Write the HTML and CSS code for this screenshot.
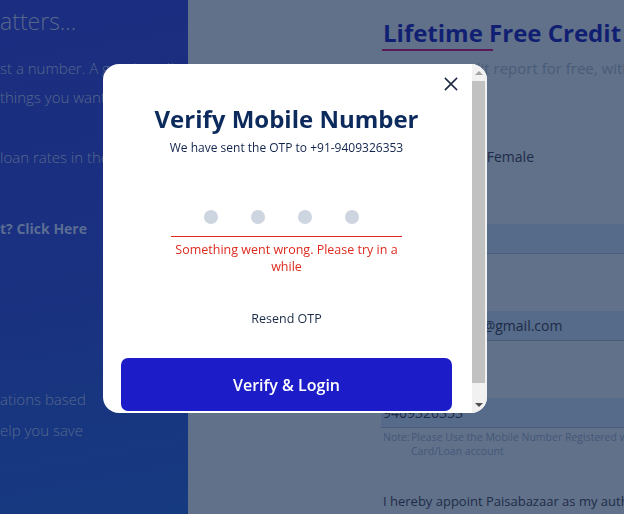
FILE: index.html
```html
<!DOCTYPE html>
<html lang="en">
<head>
<meta charset="utf-8">
<title>Verify Mobile Number</title>
<link rel="stylesheet" href="styles.css">
</head>
<body>
<div class="page">
  <aside class="side">
    <div class="side-title">atters...</div>
    <p class="side-p">st a number. A good credit score<br>things you want in life</p>
    <p class="side-p side-p2">loan rates in the market</p>
    <div class="side-link">t? Click Here</div>
    <p class="side-p side-p3">ations based<br>elp you save</p>
  </aside>
  <main class="main">
    <div class="form">
      <h2 class="form-title">Lifetime Free Credit Report</h2>
      <p class="form-sub">Get your Credit report for free, with monthly updates</p>
      <div class="gender"><span class="g-opt">Male</span><span class="g-opt">Female</span></div>
      <div class="band band1"><span class="band-text">Rahul Sharma</span></div>
      <div class="band band2"><span class="band-text">rahulsharma92@gmail.com</span></div>
      <div class="band band3"><span class="band-text">9409326353</span></div>
      <div class="note"><span class="note-label">Note:</span><span class="note-text">Please Use the Mobile Number Registered with your Credit Card/Loan account</span></div>
      <p class="consent">I hereby appoint Paisabazaar as my authorised representative</p>
    </div>
  </main>
</div>

<div class="backdrop">
  <div class="modal">
    <div class="modal-body">
      <div class="modal-head">
        <button class="close" aria-label="Close">
          <svg width="14" height="14" viewBox="0 0 14 14"><path d="M1.5 1.5 L12.5 12.5 M12.5 1.5 L1.5 12.5" stroke="#1d2942" stroke-width="1.7" fill="none" stroke-linecap="square"/></svg>
        </button>
      </div>
      <h1 class="m-title">Verify Mobile Number</h1>
      <p class="m-sub">We have sent the OTP to +91-9409326353</p>
      <div class="otp-wrap">
        <div class="otp">
          <span class="dot"></span><span class="dot"></span><span class="dot"></span><span class="dot"></span>
        </div>
        <p class="err">Something went wrong. Please try in a while</p>
      </div>
      <p class="resend">Resend OTP</p>
      <button class="verify">Verify &amp; Login</button>
    </div>
    <div class="sbar" aria-hidden="true">
      <div class="sbar-btn"><span class="tri-up"></span></div>
      <div class="sbar-track"><div class="sbar-thumb"></div></div>
      <div class="sbar-btn"><span class="tri-down"></span></div>
    </div>
  </div>
</div>
</body>
</html>
```
FILE: styles.css
```css
* { box-sizing: border-box; }
html, body { margin: 0; padding: 0; }
body {
  width: 624px;
  height: 514px;
  overflow: hidden;
  font-family: "Open Sans", "Liberation Sans", sans-serif;
  background: #617189;
}
.page {
  display: flex;
  height: 514px;
}
.side {
  width: 188px;
  flex: none;
  overflow: hidden;
  background: linear-gradient(170deg, #1b2d80 0%, #1a3080 50%, #163a80 100%);
  color: #56688b;
  white-space: nowrap;
  padding-top: 5px;
}
.side-title {
  font-size: 23px;
  line-height: 32px;
  font-weight: 300;
}
.side-p {
  margin: 17px 0 0;
  font-size: 15px;
  line-height: 29px;
  font-weight: 300;
}
.side-p2 { margin-top: 31px; }
.side-link {
  margin-top: 47px;
  font-size: 14px;
  line-height: 20px;
  font-weight: 700;
  color: #5b6d93;
}
.side-p3 {
  margin-top: 145px;
  line-height: 31px;
}
.main {
  flex: 1;
  overflow: hidden;
  padding-left: 193px;
}
.form {
  white-space: nowrap;
  padding-top: 17px;
}
.form-title {
  margin: 0;
  padding-left: 2px;
  font-size: 24px;
  line-height: 32px;
  font-weight: 700;
  color: #111f72;
}
.form-title::after {
  content: "";
  display: block;
  width: 111px;
  height: 2px;
  margin-left: -1px;
  background: #5c1a5a;
}
.form-sub {
  margin: 7px 0 0;
  padding-left: 2px;
  font-size: 15px;
  line-height: 20px;
  color: #4a5b7a;
}
.gender {
  margin-top: 69px;
  display: flex;
  gap: 50px;
  padding-left: 24px;
  font-size: 14px;
  line-height: 20px;
  color: #1e2c4a;
}
.band {
  height: 30px;
  background: #566a89;
  border-bottom: 1px solid #4b5c79;
  display: flex;
  align-items: center;
  padding-left: 2px;
  font-size: 14px;
  line-height: 20px;
  color: #1c2a47;
}
.band1 { margin-top: 57px; }
.band1 .band-text { visibility: hidden; }
.band2 { margin-top: 57px; }
.band3 { margin-top: 57px; }
.note {
  margin-top: 3px;
  display: flex;
  font-size: 10.5px;
  line-height: 13.5px;
  color: #44577a;
  padding-left: 2px;
  white-space: normal;
  width: 370px;
}
.note-label { width: 28px; flex: none; }
.consent {
  margin: 33px 0 0;
  padding-left: 2px;
  font-size: 13px;
  line-height: 20px;
  color: #1e2c4a;
}

/* Modal */
.backdrop {
  position: fixed;
  inset: 0;
  display: flex;
  align-items: flex-start;
  padding: 64px 0 0 103px;
}
.modal {
  width: 384px;
  height: 349px;
  background: #fff;
  border-radius: 16px;
  overflow: hidden;
  display: flex;
}
.modal-body {
  flex: 1;
  min-width: 0;
  display: flex;
  flex-direction: column;
  align-items: center;
  padding: 0 20px 20px 18px;
}
.modal-head {
  align-self: stretch;
  display: flex;
  justify-content: flex-end;
  padding-top: 13px;
  margin-right: -6px;
}
.close {
  width: 14px;
  height: 14px;
  padding: 0;
  border: 0;
  background: none;
  display: block;
}
.close svg { display: block; }
.m-title {
  margin: 12px 0 0;
  font-size: 24px;
  line-height: 32px;
  font-weight: 700;
  color: #0c2a5b;
  flex: none;
  white-space: nowrap;
}
.m-sub {
  margin: 5px 0 0;
  font-size: 12px;
  line-height: 16px;
  color: #10244d;
  flex: none;
}
.otp-wrap {
  width: 231px;
  margin-top: 42px;
  flex: none;
}
.otp {
  height: 39px;
  border-bottom: 1px solid #e5281d;
  display: flex;
  justify-content: center;
  align-items: center;
  gap: 33px;
  padding-right: 10px;
}
.dot {
  width: 14px;
  height: 14px;
  border-radius: 50%;
  background: #cdd5e0;
}
.err {
  margin: 4px 0 0;
  font-size: 12.5px;
  line-height: 17px;
  color: #dd2b1f;
  text-align: center;
}
.resend {
  margin: 36px 0 0;
  font-size: 12.5px;
  line-height: 16px;
  color: #1a2b48;
  flex: none;
}
.verify {
  flex: none;
  margin-top: 31px;
  align-self: stretch;
  height: 53px;
  border: 0;
  border-radius: 7px;
  background: #1c1dc9;
  color: #fff;
  font-family: "Open Sans", "Liberation Sans", sans-serif;
  font-size: 16px;
  font-weight: 600;
}

/* drawn scrollbar */
.sbar {
  width: 15px;
  flex: none;
  background: #f1f1f1;
  display: flex;
  flex-direction: column;
}
.sbar-btn {
  height: 17px;
  flex: none;
  display: flex;
  align-items: center;
  justify-content: center;
  padding-right: 1px;
}
.tri-up {
  width: 0;
  height: 0;
  border-left: 4px solid transparent;
  border-right: 4px solid transparent;
  border-bottom: 4px solid #a3a3a3;
}
.tri-down {
  width: 0;
  height: 0;
  border-left: 4px solid transparent;
  border-right: 4px solid transparent;
  border-top: 4px solid #505050;
}
.sbar-track {
  flex: 1;
  padding-top: 0;
}
.sbar-thumb {
  height: 302px;
  margin-right: 2px;
  background: #c1c1c1;
}
```
